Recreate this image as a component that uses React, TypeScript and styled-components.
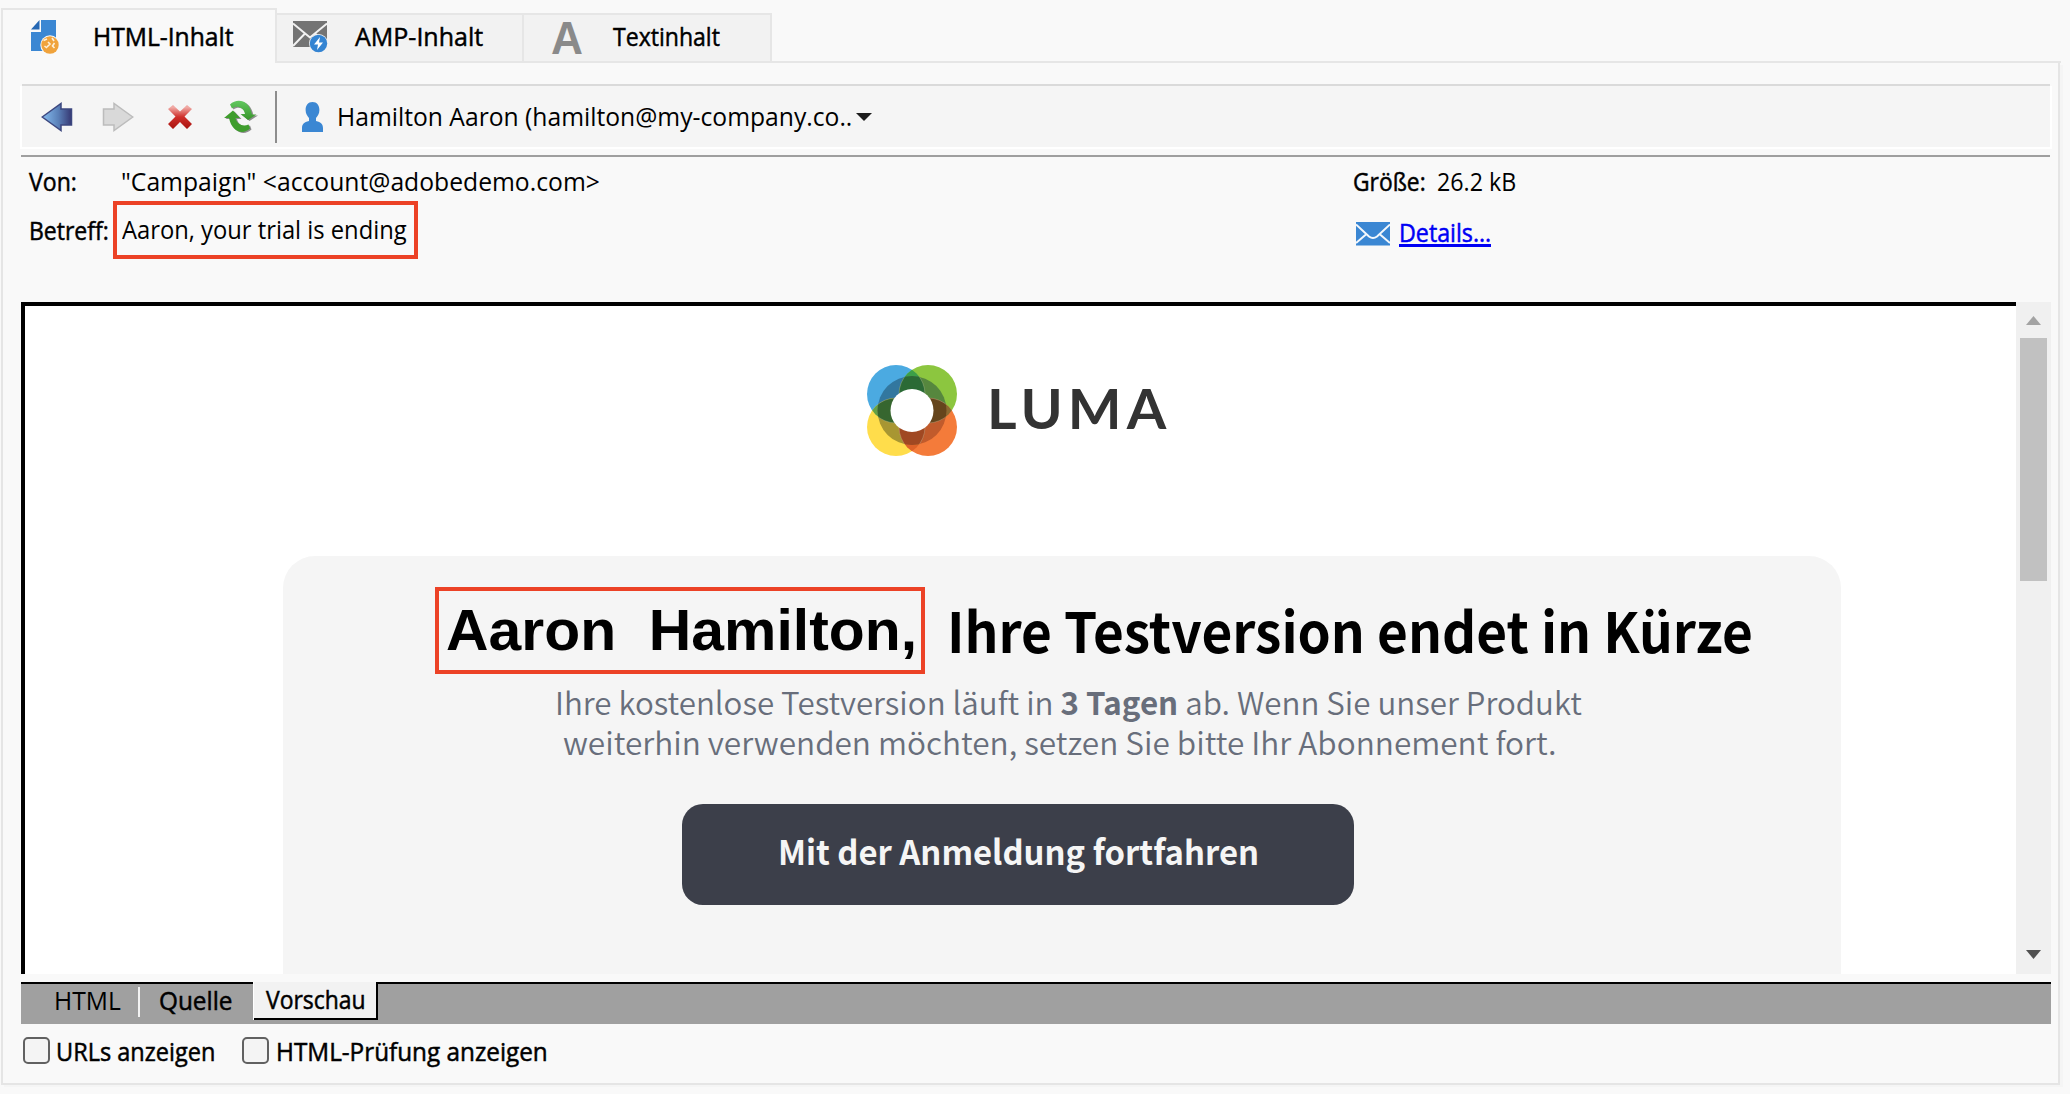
import React, { useLayoutEffect, useRef, useState } from 'react';
import styled, { createGlobalStyle, css } from 'styled-components';

const UI = '"Open Sans", "Noto Sans", sans-serif';
const MAIL = '"Noto Sans CJK SC", "Open Sans", sans-serif';
const ARIAL = '"Liberation Sans", Arial, sans-serif';

const Global = createGlobalStyle`
  * { box-sizing: border-box; }
  body { margin: 0; background: #f9f9f9; color: #000; font-family: ${UI}; overflow: hidden; }
  svg { display: block; flex: none; }
`;

/* Text run set to a fixed measure: the glyphs are condensed to fill it. */
const RunBox = styled.span<{ $w: number; $gap?: number }>`
  display: block;
  flex: none;
  width: ${p => p.$w}px;
  margin-left: ${p => p.$gap ?? 0}px;
  white-space: pre;
`;
const RunText = styled.span`
  display: inline-block;
  transform-origin: 0 50%;
`;
function Run({ w, gap, children, className }: { w: number; gap?: number; children: React.ReactNode; className?: string }) {
  const ref = useRef<HTMLSpanElement>(null);
  const [scale, setScale] = useState(1);
  useLayoutEffect(() => {
    if (ref.current) setScale(w / ref.current.offsetWidth);
  }, [w]);
  return (
    <RunBox $w={w} $gap={gap} className={className}>
      <RunText ref={ref} style={{ transform: `scaleX(${scale})` }}>{children}</RunText>
    </RunBox>
  );
}

const uiText = css`
  font: 400 25px/34px ${UI};
  height: 34px;
`;
const Value = styled(Run)`${uiText}`;
const Label = styled(Run)`
  ${uiText}
  -webkit-text-stroke: 0.5px currentColor;
`;
const Halo = styled(Label)`
  text-shadow: 0 0 3px #fff, 0 0 3px #fff;
`;

const Page = styled.div`
  width: 2070px;
  height: 1094px;
  display: flex;
  flex-direction: column;
  background: #f9f9f9;
`;

/* ---- tabs ---- */
const TabStrip = styled.div`
  height: 63px;
  padding-left: 1px;
  width: 2061px;
  display: flex;
  align-items: flex-end;
`;
const Tab = styled.div<{ $w: number; $active?: boolean }>`
  width: ${p => p.$w}px;
  height: ${p => (p.$active ? 55 : 50)}px;
  padding-top: ${p => (p.$active ? 9 : 4)}px;
  display: flex;
  flex: none;
  border: solid #e6e6e6;
  border-width: ${p => (p.$active ? '2px 2px 0 2px' : '2px 2px 2px 0')};
  background: ${p => (p.$active ? '#f9f9f9' : '#f2f2f2')};
`;
const TabFill = styled.div`
  flex: 1;
  border-bottom: 2px solid #e6e6e6;
`;
const LetterIcon = styled(Run)`
  font: 700 47px/37px ${ARIAL};
  color: #8a8a8a;
`;

/* ---- panel ---- */
const Panel = styled.div`
  width: 2059px;
  height: 1022px;
  margin-left: 1px;
  padding-left: 18px;
  border: solid #e5e5e5;
  border-width: 0 2px 2px 2px;
  box-shadow: 3px 2px 0 #f5f5f5;
`;
const Toolbar = styled.div`
  width: 2028px;
  height: 63px;
  margin: 21px 0 0 1px;
  padding-left: 20px;
  display: flex;
  align-items: center;
  background: #f5f5f5;
  border-top: 2px solid #dadada;
  box-shadow: -2px 2px 0 #fff, 2px 2px 0 #fff;
`;
const ToolbarValue = styled(Value)`
  margin-bottom: 2px;
`;
const Slot = styled.div<{ $gap: number; $down?: number }>`
  margin-left: ${p => p.$gap}px;
  padding-top: ${p => p.$down ?? 0}px;
`;
const Divider = styled.div`
  width: 2px;
  height: 52px;
  margin-left: 17px;
  background: #8d8d8d;
`;
const Rule = styled.div`
  width: 2029px;
  height: 2px;
  margin-top: 8px;
  background: #9f9f9f;
`;

/* ---- message header ---- */
const Header = styled.div`
  height: 145px;
  display: grid;
  grid-template-columns: 1328px 1fr;
`;
const HeaderCol = styled.div``;
const HeaderRow = styled.div<{ $h: number; $pt: number }>`
  height: ${p => p.$h}px;
  padding-top: ${p => p.$pt}px;
  display: flex;
  align-items: flex-start;
`;
const SubjectMark = styled.div`
  width: 305px;
  height: 58px;
  margin: -12px 0 0 4px;
  padding: 7px 0 0 5px;
  border: 4.5px solid #ec4226;
`;
const DetailsLink = styled(Label)`
  color: #0000f5;
  border-bottom: 3px solid #0000f5;
  height: 32px;
`;

/* ---- preview ---- */
const Preview = styled.div`
  width: 2030px;
  height: 672px;
  display: flex;
`;
const Mail = styled.div`
  width: 1995px;
  height: 672px;
  border: solid #000;
  border-width: 4px 0 0 4px;
  background: #fff;
  display: flex;
  flex-direction: column;
  overflow: hidden;
`;
const Brand = styled.div`
  height: 250px;
  padding: 59px 0 0 842px;
  display: flex;
`;
const BrandName = styled(Run)`
  font: 700 56px/60px Lato, sans-serif;
  letter-spacing: 5px;
  color: #333;
  padding-top: 13px;
`;
const Card = styled.div`
  width: 1558px;
  flex: 1;
  margin-left: 258px;
  border-radius: 32px 32px 0 0;
  background: #f5f5f5;
  display: flex;
  flex-direction: column;
  padding-top: 31px;
`;
const Title = styled.div`
  display: flex;
  padding-left: 152px;
  height: 87px;
`;
const NameMark = styled.div`
  width: 490px;
  height: 87px;
  border: 4.5px solid #ec4226;
  padding: 6px 0 0 7px;
`;
const NameText = styled(Run)`
  font: 700 58px/66px ${ARIAL};
`;
const TitleText = styled(Run)`
  font: 700 56px/84px ${MAIL};
`;
const Para = styled.div`
  height: 130px;
  padding-top: 7px;
  color: #686e7b;
`;
const ParaLine = styled(Run)`
  font: 350 31.5px/40px ${MAIL};
  height: 40px;
`;
const Strong = styled.b`
  font-weight: 600;
`;
const Button = styled.div`
  width: 672px;
  height: 101px;
  margin-left: 399px;
  padding: 22px 0 0 96px;
  border-radius: 21px;
  background: #3c3f4a;
  color: #f5f5f5;
`;
const ButtonText = styled(Run)`
  font: 700 34px/50px ${MAIL};
`;

const Scrollbar = styled.div`
  width: 35px;
  background: #f0f0f0;
  display: flex;
  flex-direction: column;
  align-items: center;
  padding: 14px 0 15px;
`;
const Thumb = styled.div`
  width: 27px;
  height: 243px;
  margin: 13px 0 auto;
  background: #c1c1c1;
`;

/* ---- bottom ---- */
const ViewBar = styled.div`
  width: 2030px;
  height: 42px;
  margin-top: 8px;
  border-top: 2px solid #000;
  background: #a0a0a0;
  display: flex;
`;
const ViewTab = styled.div<{ $w: number; $pl: number }>`
  width: ${p => p.$w}px;
  margin-top: -1px;
  padding-left: ${p => p.$pl}px;
`;
const ViewSep = styled.div`
  width: 2px;
  height: 30px;
  margin-top: 3px;
  background: #f2f2f2;
`;
const ViewActive = styled.div`
  width: 124px;
  height: 38px;
  margin-top: -2px;
  padding-left: 12px;
  background: #f2f2f2;
  border: solid #000;
  border-width: 0 2px 2px 0;
  box-shadow: -1px 0 0 #fff;
`;
const Checks = styled.div`
  height: 58px;
  display: flex;
  padding: 10px 0 0 2px;
`;
const Box = styled.div<{ $gap?: number }>`
  width: 27px;
  height: 27px;
  margin: 3px 0 0 ${p => p.$gap ?? 0}px;
  border: 2px solid #616161;
  border-radius: 5px;
  background: #f4f4f4;
`;

/* ---- icons ---- */
const FileIcon = () => (
  <svg width="28" height="34" viewBox="0 0 28 34">
    <path d="M10 0H25V31H0V12H10Z" fill="#3b87d3" />
    <path d="M8.500 0V9.500H0Z" fill="#2668b4" />
    <circle cx="19" cy="25" r="9.700" fill="#f9f9f9" />
    <circle cx="19" cy="25" r="8.700" fill="#f0a33c" />
    <path d="M12.500 20.500l3.500-1.500M21 18l2 3M17 22l2 2-3 3M23.500 23l-2 3 2 2M13.500 26l2.500 2" stroke="#fdf1dc" strokeWidth="1.600" fill="none" />
  </svg>
);
const AmpIcon = () => (
  <svg width="35" height="33" viewBox="0 0 35 33">
    <rect width="34" height="26" fill="#747474" />
    <path d="M0 2.500L17 16.500L34 2.500M0 25L12 12.500M34 25L22 12.500" stroke="#f2f2f2" strokeWidth="2" fill="none" />
    <circle cx="25.500" cy="22.500" r="9.500" fill="#f2f2f2" />
    <circle cx="25.500" cy="22.500" r="8.700" fill="#3484d2" />
    <path d="M27 16L21 23.500H25L24 29L30 21.500H26Z" fill="#fff" />
  </svg>
);
const ArrowIcon = ({ forward }: { forward?: boolean }) => (
  <svg width="32" height="30" viewBox="0 0 32 30">
    <defs>
      <linearGradient id="back" x1="0" x2="1"><stop offset="0" stopColor="#86bdf0" /><stop offset=".55" stopColor="#5a80b8" /><stop offset="1" stopColor="#363873" /></linearGradient>
    </defs>
    <path
      d="M1.200 15L20 1.500V7H30.500V23H20V28.500Z"
      transform={forward ? 'matrix(-1 0 0 1 32 0)' : undefined}
      fill={forward ? '#d9d9d9' : 'url(#back)'}
      stroke={forward ? '#bcbcbc' : '#3c477f'}
      strokeWidth="1.500"
    />
  </svg>
);
const StopIcon = () => (
  <svg width="26" height="26" viewBox="0 0 26 26">
    <defs><linearGradient id="stop" x1="0" x2="0" y1="0" y2="1"><stop offset=".1" stopColor="#f0a9a4" /><stop offset=".5" stopColor="#cf2f2b" /><stop offset="1" stopColor="#a8140f" /></linearGradient></defs>
    <path d="M1 5L6 1L13 7.500L20 1L25 5L17.500 12.500L25 20L20 25L13 18L6 25L1 20L8.500 12.500Z" fill="url(#stop)" />
  </svg>
);
const RefreshIcon = () => (
  <svg width="34" height="34" viewBox="0 0 34 34">
    <defs>
      <linearGradient id="rf" x1="0" x2="0" y1="0" y2="1"><stop offset="0" stopColor="#62c860" /><stop offset="1" stopColor="#38952a" /></linearGradient>
    </defs>
    <g transform="translate(1.500 1)" fill="#8d8d8d">
      <path d="M6 4.500C13-2 25-.5 28 14.500H32.500L24 20L16.500 14H21C20 7.500 13 4.500 8 8.500Z" />
      <path d="M26 28.500C19 35 8 32.500 5 18H0L9 10.500L16 18H11.500C13 24.500 19 27 24.500 24.500Z" />
    </g>
    <path d="M6 4.500C13-2 25-.5 28 14.500H32.500L24 20L16.500 14H21C20 7.500 13 4.500 8 8.500Z" fill="url(#rf)" />
    <path d="M26 28.500C19 35 8 32.500 5 18H0L9 10.500L16 18H11.500C13 24.500 19 27 24.500 24.500Z" fill="#3f9d2d" />
  </svg>
);
const PersonIcon = () => (
  <svg width="21" height="30" viewBox="0 0 21 30">
    <path d="M10.500 0C6 0 3.600 3.500 3.600 8C3.600 12 5.500 14 7 16V19C2 20 0 22.500 0 26V30H21V26C21 22.500 19 20 14 19V16C15.500 14 17.400 12 17.400 8C17.400 3.500 15 0 10.500 0Z" fill="#3b87d3" />
  </svg>
);
const Triangle = ({ fill, up, w = 15, h = 9 }: { fill: string; up?: boolean; w?: number; h?: number }) => (
  <svg width={w} height={h} viewBox="0 0 15 9" preserveAspectRatio="none"><path d={up ? 'M0 9L7.500 0L15 9Z' : 'M0 0H15L7.500 9Z'} fill={fill} /></svg>
);
const EnvelopeIcon = () => (
  <svg width="34" height="24" viewBox="0 0 34 24">
    <rect width="34" height="23.500" fill="#3b87d3" />
    <path d="M0 2.500L13 14.500Q17 17.500 21 14.500L34 2.500M0 21L10.500 12M34 21L23.500 12" stroke="#f4f8fc" strokeWidth="2" fill="none" />
  </svg>
);
const LumaMark = () => (
  <svg width="90" height="91" viewBox="-45 -45.500 90 91">
    <defs>
      <clipPath id="cb"><circle cx="-16" cy="-16.500" r="29" /></clipPath>
      <clipPath id="co"><circle cx="16" cy="16.500" r="29" /></clipPath>
      <clipPath id="ring"><circle r="34.500" /></clipPath>
    </defs>
    <circle cx="-16" cy="-16.500" r="29" fill="#4baae1" />
    <circle cx="16" cy="-16.500" r="29" fill="#8cc63f" />
    <circle cx="-16" cy="16.500" r="29" fill="#ffdd4b" />
    <circle cx="16" cy="16.500" r="29" fill="#f47b3a" />
    <g clipPath="url(#cb)"><circle cx="16" cy="-16.500" r="29" fill="#3c9f48" /><circle cx="-16" cy="16.500" r="29" fill="#64a145" /></g>
    <g clipPath="url(#co)"><circle cx="16" cy="-16.500" r="29" fill="#8a6a31" /><circle cx="-16" cy="16.500" r="29" fill="#de6229" /></g>
    <g clipPath="url(#ring)">
      <circle cx="-16" cy="-16.500" r="29" fill="#32779f" />
      <circle cx="16" cy="-16.500" r="29" fill="#56873e" />
      <circle cx="-16" cy="16.500" r="29" fill="#a89632" />
      <circle cx="16" cy="16.500" r="29" fill="#c15b2c" />
      <g clipPath="url(#cb)"><circle cx="16" cy="-16.500" r="29" fill="#2b6a35" /><circle cx="-16" cy="16.500" r="29" fill="#36662f" /></g>
      <g clipPath="url(#co)"><circle cx="16" cy="-16.500" r="29" fill="#65451c" /><circle cx="-16" cy="16.500" r="29" fill="#a04822" /></g>
      <g fill="none" stroke="#c9c9a8" strokeOpacity=".4" strokeWidth=".8">
        <circle cx="-16" cy="-16.500" r="29" /><circle cx="16" cy="-16.500" r="29" />
        <circle cx="-16" cy="16.500" r="29" /><circle cx="16" cy="16.500" r="29" />
      </g>
    </g>
    <circle r="21.500" fill="#fff" />
  </svg>
);

export default function App() {
  return (
    <Page>
      <Global />
      <TabStrip>
        <Tab $w={276} $active>
          <Slot $gap={28} $down={1}><FileIcon /></Slot>
          <Label w={141} gap={34}>HTML-Inhalt</Label>
        </Tab>
        <Tab $w={247}>
          <Slot $gap={16} $down={2}><AmpIcon /></Slot>
          <Halo w={128} gap={27}>AMP-Inhalt</Halo>
        </Tab>
        <Tab $w={248}>
          <LetterIcon w={32} gap={27}>A</LetterIcon>
          <Halo w={107} gap={30}>Textinhalt</Halo>
        </Tab>
        <TabFill />
      </TabStrip>
      <Panel>
        <Toolbar>
          <Slot $gap={-1}><ArrowIcon /></Slot>
          <Slot $gap={29}><ArrowIcon forward /></Slot>
          <Slot $gap={33}><StopIcon /></Slot>
          <Slot $gap={31}><RefreshIcon /></Slot>
          <Divider />
          <Slot $gap={25}><PersonIcon /></Slot>
          <ToolbarValue w={515} gap={14}>Hamilton Aaron (hamilton@my-company.co..</ToolbarValue>
          <Slot $gap={4}><Triangle fill="#1c1c1c" h={8} w={16} /></Slot>
        </Toolbar>
        <Rule />
        <Header>
          <HeaderCol>
            <HeaderRow $h={47} $pt={7}>
              <Label w={48} gap={8}>Von:</Label>
              <Value w={479} gap={44}>"Campaign" &lt;account@adobedemo.com&gt;</Value>
            </HeaderRow>
            <HeaderRow $h={48} $pt={9}>
              <Label w={80} gap={8}>Betreff:</Label>
              <SubjectMark><Value w={285}>Aaron, your trial is ending</Value></SubjectMark>
            </HeaderRow>
          </HeaderCol>
          <HeaderCol>
            <HeaderRow $h={48} $pt={7}>
              <Label w={73} gap={4}>Größe:</Label>
              <Value w={79} gap={11}>26.2 kB</Value>
            </HeaderRow>
            <HeaderRow $h={48} $pt={10}>
              <Slot $gap={7} $down={7}><EnvelopeIcon /></Slot>
              <DetailsLink w={92} gap={9}>Details...</DetailsLink>
            </HeaderRow>
          </HeaderCol>
        </Header>
        <Preview>
          <Mail>
            <Brand>
              <LumaMark />
              <BrandName w={184} gap={30}>LUMA</BrandName>
            </Brand>
            <Card>
              <Title>
                <NameMark><NameText w={471}>Aaron  Hamilton,</NameText></NameMark>
                <TitleText w={806} gap={22}>Ihre Testversion endet in Kürze</TitleText>
              </Title>
              <Para>
                <ParaLine w={1027} gap={272}>Ihre kostenlose Testversion läuft in <Strong>3 Tagen</Strong> ab. Wenn Sie unser Produkt</ParaLine>
                <ParaLine w={994} gap={280}>weiterhin verwenden möchten, setzen Sie bitte Ihr Abonnement fort.</ParaLine>
              </Para>
              <Button><ButtonText w={481}>Mit der Anmeldung fortfahren</ButtonText></Button>
            </Card>
          </Mail>
          <Scrollbar>
            <Triangle fill="#a3a3a3" up />
            <Thumb />
            <Triangle fill="#505050" />
          </Scrollbar>
        </Preview>
        <ViewBar>
          <ViewTab $w={117} $pl={33}><Value w={67}>HTML</Value></ViewTab>
          <ViewSep />
          <ViewTab $w={114} $pl={19}><Label w={73}>Quelle</Label></ViewTab>
          <ViewActive><Label w={100}>Vorschau</Label></ViewActive>
        </ViewBar>
        <Checks>
          <Box />
          <Label w={159} gap={6}>URLs anzeigen</Label>
          <Box $gap={27} />
          <Label w={272} gap={7}>HTML-Prüfung anzeigen</Label>
        </Checks>
      </Panel>
    </Page>
  );
}
